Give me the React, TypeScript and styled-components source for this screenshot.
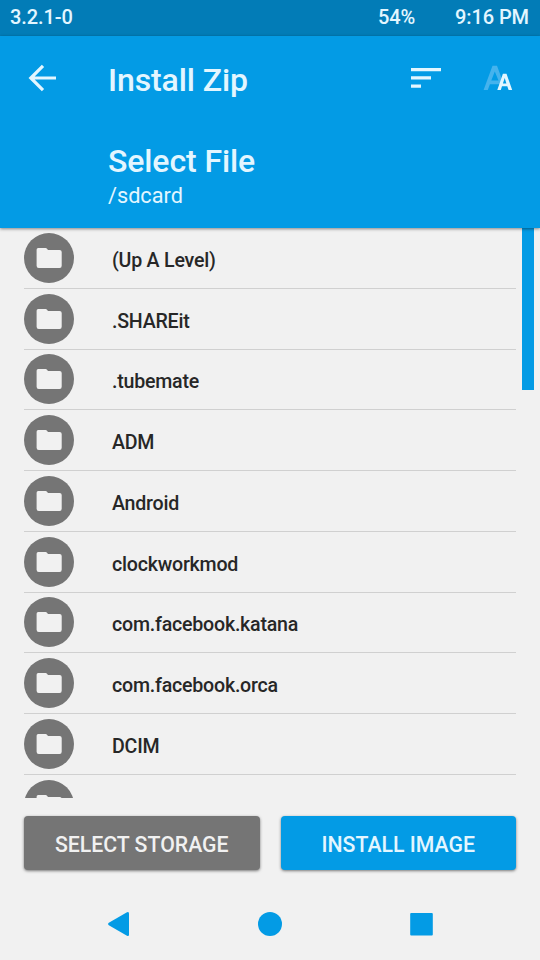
import React from "react";
import styled, { createGlobalStyle } from "styled-components";

const GlobalStyle = createGlobalStyle`
  *, *::before, *::after { box-sizing: border-box; }
  html, body { margin: 0; padding: 0; background: #f1f1f1; }
  body { font-family: Roboto, "Liberation Sans", sans-serif; }
  button { font: inherit; border: 0; padding: 0; margin: 0; background: none; }
`;

const accent = "#039be5";
const grey = "#757575";

const Screen = styled.div`
  width: 540px;
  height: 960px;
  display: flex;
  flex-direction: column;
  overflow: hidden;
  background: #f1f1f1;
`;

const StatusBar = styled.div`
  flex: none;
  display: flex;
  height: 36px;
  padding: 0 11px 2px 10px;
  align-items: center;
  background: #027cb7;
  color: #e3f6ff;
  font-size: 20px;
  font-weight: 500;
  line-height: 34px;
  letter-spacing: -0.1px;
`;

const StatusText = styled.span<{ $push?: boolean; $gap?: number }>`
  margin-left: ${(p) => (p.$push ? "auto" : `${p.$gap ?? 0}px`)};
  white-space: pre;
`;

const Header = styled.header`
  flex: none;
  height: 192px;
  background: ${accent};
  color: #e3f6ff;
  box-shadow: 0 1px 3px rgba(0, 0, 0, 0.45);
  z-index: 1;
`;

const Toolbar = styled.div`
  display: flex;
  height: 84px;
  align-items: center;
  padding: 0 26px 0 24px;
`;

const IconButton = styled.button<{ $left?: number }>`
  display: flex;
  height: 36px;
  margin-left: ${(p) => p.$left ?? 0}px;
  svg { display: block; }
`;

const Title = styled.h1`
  flex: 1;
  margin: 4px 0 0 48px;
  font-size: 32px;
  font-weight: 500;
  line-height: 40px;
  letter-spacing: -0.1px;
`;

const Heading = styled.div`
  padding: 21px 0 0 108px;
`;

const Subtitle = styled.h2`
  margin: 0;
  font-size: 32px;
  font-weight: 500;
  line-height: 40px;
  letter-spacing: -0.1px;
`;

const Path = styled.div`
  margin-top: 1px;
  font-size: 21.7px;
  line-height: 28px;
`;

const ListArea = styled.main`
  flex: none;
  display: flex;
  height: 570px;
  padding: 0 6px 0 24px;
  overflow: hidden;
`;

const List = styled.ul`
  flex: none;
  width: 492px;
  margin: 0;
  padding: 0;
  list-style: none;
`;

const Row = styled.li`
  display: flex;
  height: 60.75px;
  padding-top: 4.9px;
  align-items: flex-start;
  border-bottom: 1px solid #d0d0d0;
`;

const Avatar = styled.span`
  flex: none;
  display: flex;
  width: 50px;
  height: 50px;
  border-radius: 50%;
  align-items: center;
  justify-content: center;
  background: ${grey};
`;

const Name = styled.span`
  margin: 8px 0 0 38px;
  color: #272727;
  font-size: 19.6px;
  font-weight: 500;
  line-height: 40px;
  letter-spacing: -0.22px;
`;

const ScrollThumb = styled.div`
  width: 12px;
  height: 162px;
  margin-left: auto;
  background: ${accent};
`;

const Actions = styled.div`
  display: grid;
  grid-template-columns: 1fr 1fr;
  gap: 21px;
  height: 54px;
  margin: 18px 24px 0;
`;

const ActionButton = styled.button<{ $primary?: boolean }>`
  && {
    padding-top: 3px;
    border-radius: 4px;
    background: ${(p) => (p.$primary ? accent : grey)};
    color: ${(p) => (p.$primary ? "#e3f6ff" : "#f1f1f1")};
    box-shadow: 0 1px 3px rgba(0, 0, 0, 0.5);
    font-size: 21.25px;
    font-weight: 500;
    line-height: 51px;
  }
`;

const NavBar = styled.nav`
  flex: 1;
  display: flex;
  justify-content: space-between;
  padding: 41px 107px 0;
  svg { display: block; }
`;

const FolderIcon = () => (
  <svg width="26" height="22" viewBox="0 0 26 22" fill="#f1f1f1">
    <path d="M2.2 1H9.6Q10.5 1 11.2 2L12 3H23.6Q25.7 3 25.7 5V18.7Q25.7 21 23.6 21H2.8Q.6 21 .6 18.7V2.7Q.6 1 2.2 1Z" />
  </svg>
);

const entries = [
  "(Up A Level)",
  ".SHAREit",
  ".tubemate",
  "ADM",
  "Android",
  "clockworkmod",
  "com.facebook.katana",
  "com.facebook.orca",
  "DCIM",
  "",
];

export default function App() {
  return (
    <Screen>
      <GlobalStyle />
      <StatusBar>
        <StatusText>3.2.1-0</StatusText>
        <StatusText $push>54%</StatusText>
        <StatusText $gap={40}>9:16 PM</StatusText>
      </StatusBar>
      <Header>
        <Toolbar>
          <IconButton aria-label="Back">
            <svg width="36" height="36" viewBox="0 0 36 36" fill="none" stroke="#e3f6ff" strokeWidth="3.2">
              <path d="M32 18H7M19 5.8L6.8 18L19 30.2" />
            </svg>
          </IconButton>
          <Title>Install Zip</Title>
          <IconButton aria-label="Sort">
            <svg width="36" height="36" viewBox="0 0 36 36" fill="#e3f6ff">
              <path d="M3 8h30v3.2H3zM3 16.3h20v3.2H3zM3 24.6h10v3.2H3z" />
            </svg>
          </IconButton>
          <IconButton $left={38} aria-label="Font size">
            <svg width="32" height="36" viewBox="0 0 32 36">
              <path fill="#45b3ed" fillRule="evenodd" d="M10.5 5.8H15L21 22L18.6 26.2L17.9 24.3H7.9L5.8 30H1.6ZM12.8 11.5L9.3 20.6H16.5Z" />
              <path fill="#e3f6ff" fillRule="evenodd" d="M20.9 13.8H24.5L30.2 30H26.6L25.3 26.3H20L18.8 30H15.3ZM22.7 18L20.9 23.5H24.4Z" />
            </svg>
          </IconButton>
        </Toolbar>
        <Heading>
          <Subtitle>Select File</Subtitle>
          <Path>/sdcard</Path>
        </Heading>
      </Header>
      <ListArea>
        <List>
          {entries.map((name, i) => (
            <Row key={i}>
              <Avatar>
                <FolderIcon />
              </Avatar>
              <Name>{name}</Name>
            </Row>
          ))}
        </List>
        <ScrollThumb />
      </ListArea>
      <Actions>
        <ActionButton>SELECT STORAGE</ActionButton>
        <ActionButton $primary>INSTALL IMAGE</ActionButton>
      </Actions>
      <NavBar>
        <svg width="24" height="26" viewBox="0 0 24 26" fill={accent}>
          <path d="M1.8 11.8L20 1.2Q22 .3 22 2.5V23.5Q22 25.7 20 24.8L1.8 14.2Q0 13 1.8 11.8Z" />
        </svg>
        <svg width="24" height="26" viewBox="0 0 24 26" fill={accent}>
          <circle cx="12" cy="13" r="12" />
        </svg>
        <svg width="24" height="26" viewBox="0 0 24 26" fill={accent}>
          <rect x="1.2" y="2" width="22.6" height="22.4" rx="1" />
        </svg>
      </NavBar>
    </Screen>
  );
}
